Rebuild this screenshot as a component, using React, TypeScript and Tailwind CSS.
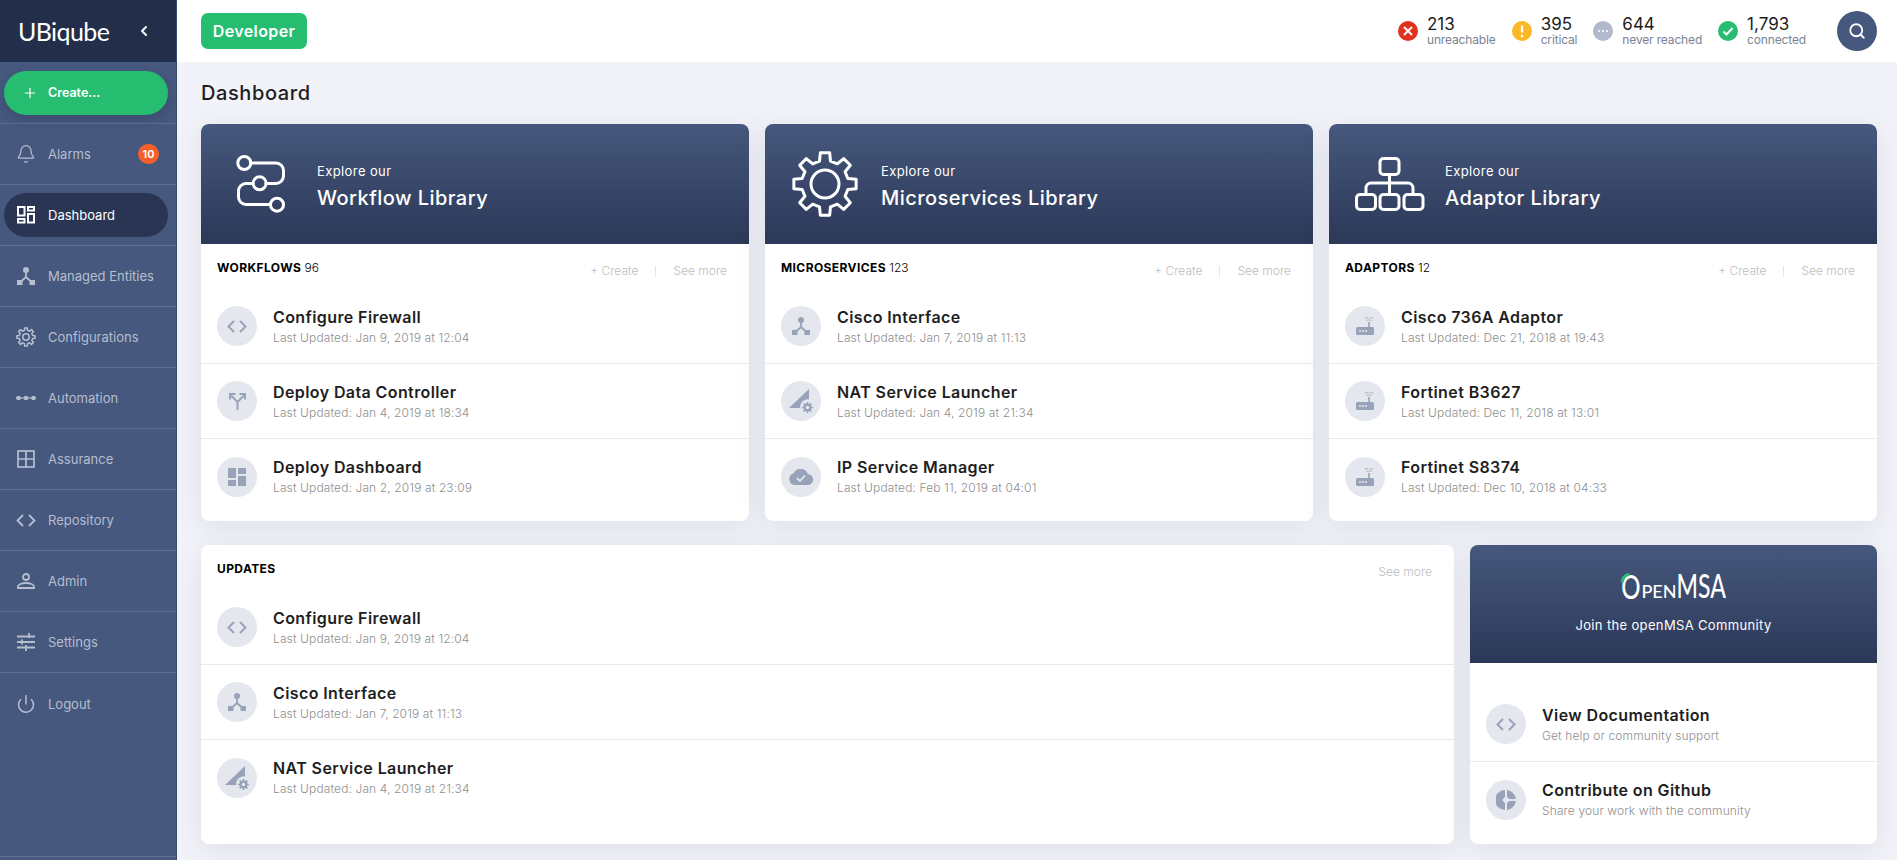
import React from "react";
import { Plus, ChevronLeft, Search, Bell, Power } from "lucide-react";

function gearPath(cx: number, cy: number, ro: number, ri: number, teeth: number) {
  const pts: string[] = [];
  const step = (Math.PI * 2) / teeth;
  for (let i = 0; i < teeth; i++) {
    const a = -Math.PI / 2 + i * step;
    const w1 = step * 0.3;
    const w2 = step * 0.19;
    const p = (r: number, t: number) => `${(cx + r * Math.cos(t)).toFixed(2)} ${(cy + r * Math.sin(t)).toFixed(2)}`;
    pts.push(p(ri, a - w1), p(ro, a - w2), p(ro, a + w2), p(ri, a + w1));
  }
  return "M" + pts.join("L") + "Z";
}

const CodeIcon = ({ c = "#98a2b8", w = 20, sw = 2 }: { c?: string; w?: number; sw?: number }) => (
  <svg width={w} height={w * 0.65} viewBox="0 0 20 13" fill="none" stroke={c} strokeWidth={sw}>
    <path d="M7 1 1.500 6.500 7 12M13 1l5.500 5.500L13 12" />
  </svg>
);
const NetIcon = ({ c = "#98a2b8", s = 18 }: { c?: string; s?: number }) => (
  <svg width={s} height={s} viewBox="0 0 18 18" fill={c}>
    <circle cx="9" cy="3" r="3" />
    <rect x="0" y="13" width="5.500" height="5" />
    <rect x="12.500" y="13" width="5.500" height="5" />
    <path d="M9 4v6M9 10l-5 4.500M9 10l5 4.500" stroke={c} strokeWidth="1.800" fill="none" />
  </svg>
);
const SplitIcon = () => (
  <svg width="17" height="17" viewBox="0 0 17 17" fill="none" stroke="#98a2b8" strokeWidth="2">
    <path d="M8.500 17V9L2 2.500M8.500 9 15 2.500" />
    <path d="M1 6.500V1h5.500M16 6.500V1h-5.500" />
  </svg>
);
const TilesIcon = () => (
  <svg width="18" height="18" viewBox="0 0 18 18" fill="#98a2b8">
    <rect x="0" y="0" width="8" height="10" />
    <rect x="10" y="0" width="8" height="6" />
    <rect x="0" y="12" width="8" height="6" />
    <rect x="10" y="8" width="8" height="10" />
  </svg>
);
const NatIcon = () => (
  <svg width="24" height="24" viewBox="0 0 24 24" fill="#98a2b8">
    <path d="M0 19 20 0v10.500a7.500 7.500 0 0 0-8.800 8.500z" />
    <path d={gearPath(18.500, 18.500, 5.500, 4, 8)} />
    <circle cx="18.500" cy="18.500" r="1.700" fill="#e4e7ed" />
  </svg>
);
const CloudIcon = () => (
  <svg width="24" height="16" viewBox="0 0 24 16" fill="#98a2b8">
    <path d="M6 16a6 6 0 0 1-1.200-11.800A7.500 7.500 0 0 1 18.700 5 5.500 5.500 0 0 1 18.500 16z" />
    <path d="m8 9 3 3 5-5.500" fill="none" stroke="#e4e7ed" strokeWidth="1.800" />
  </svg>
);
const RouterIcon = () => (
  <svg width="18" height="18" viewBox="0 0 18 18" fill="none">
    <path d="M9 1.500a6 6 0 0 1 8 0M10.500 3.800a3.500 3.500 0 0 1 5 0" stroke="#b0b7c8" strokeWidth="1.100" />
    <rect x="12.200" y="5" width="1.600" height="6" fill="#98a2b8" />
    <rect x="0" y="10" width="18" height="8" rx="1.500" fill="#98a2b8" />
    <circle cx="4" cy="14" r="1" fill="#e4e7ed" />
    <circle cx="7" cy="14" r="1" fill="#e4e7ed" />
    <circle cx="10" cy="14" r="1" fill="#e4e7ed" />
  </svg>
);
const PieIcon = () => (
  <svg width="20" height="20" viewBox="0 0 20 20" fill="#98a2b8">
    <path d="M9 0v6.500L6.500 10 9 13.500V20A10 10 0 0 1 9 0z" />
    <path d="M11 0a10 10 0 0 1 8.900 9H13.200L11 6.500z" />
    <path d="M13.200 11h6.700A10 10 0 0 1 11 20v-6.500z" />
  </svg>
);

const side = "#b6bed0";
const sideIcons: Record<string, React.ReactNode> = {
  Alarms: <Bell size={20} strokeWidth={1.5} color={side} />,
  Dashboard: (
    <svg width="18" height="18" viewBox="0 0 18 18" fill="none" stroke="#fff" strokeWidth="2">
      <rect x="1" y="1" width="6.500" height="8.500" />
      <rect x="11" y="1" width="6" height="3.500" />
      <rect x="1" y="13" width="6.500" height="3.500" />
      <rect x="11" y="8" width="6" height="8.500" />
    </svg>
  ),
  "Managed Entities": <NetIcon c={side} />,
  Configurations: (
    <svg width="20" height="20" viewBox="0 0 20 20" fill="none" stroke={side} strokeWidth="1.500" strokeLinejoin="round">
      <path d={gearPath(10, 10, 9.200, 6.800, 8)} />
      <circle cx="10" cy="10" r="3.200" />
    </svg>
  ),
  Automation: (
    <svg width="20" height="6" viewBox="0 0 20 6" fill={side}>
      <path d="M0 3h20" stroke={side} strokeWidth="1.200" />
      <circle cx="2.500" cy="3" r="2.300" />
      <circle cx="10" cy="3" r="2.300" />
      <circle cx="17.500" cy="3" r="2.300" />
    </svg>
  ),
  Assurance: (
    <svg width="18" height="18" viewBox="0 0 18 18" fill="none" stroke={side} strokeWidth="1.700">
      <rect x="1" y="1" width="16" height="16" />
      <path d="M9 1v16M1 9h16" />
    </svg>
  ),
  Repository: <CodeIcon c={side} sw={1.800} />,
  Admin: (
    <svg width="18" height="16" viewBox="0 0 18 16" fill="none" stroke={side} strokeWidth="1.800">
      <circle cx="9" cy="4" r="3" />
      <path d="M1 15v-1.500c0-2 4-3.500 8-3.500s8 1.500 8 3.500V15z" />
    </svg>
  ),
  Settings: (
    <svg width="18" height="18" viewBox="0 0 18 18" fill="none" stroke={side} strokeWidth="1.800">
      <path d="M0 3.500h18M0 9h18M0 14.500h18" />
      <path d="M12 0v5M5 6.500v5M9 12v6" />
    </svg>
  ),
  Logout: <Power size={20} strokeWidth={1.800} color={side} />,
};

const NavItem = ({ label, badge }: { label: string; badge?: string }) => (
  <div className="h-[61px] shrink-0 border-b border-[#5f7094] flex items-center relative">
    <div className="w-[48px] pl-[16px] flex justify-start"><span className="w-[20px] flex justify-center items-center">{sideIcons[label]}</span></div>
    <span className="text-[13px] pt-[2px] text-[#b6bed0]">{label}</span>
    {badge && (
      <span className="absolute left-[138px] top-[20px] w-[21px] h-[20px] rounded-full bg-[#f4602a] text-white text-[11px] font-semibold flex items-center justify-center">
        {badge}
      </span>
    )}
  </div>
);

const Sidebar = () => (
  <aside className="w-[177px] h-[860px] shrink-0 bg-[#46587d] border-r border-[#3a4a6c] flex flex-col overflow-hidden">
    <div className="h-[62px] shrink-0 bg-[#232e4a] flex items-center pl-[18px] pr-[24px] justify-between">
      <span className="text-white text-[25px] leading-none tracking-[-0.6px] font-normal" style={{ fontFamily: "Lato, sans-serif" }}>UBiqube</span>
      <ChevronLeft size={16} strokeWidth={3} color="#fff" />
    </div>
    <div className="h-[62px] shrink-0 border-b border-[#5f7094] pt-[9px] px-[4px]">
      <div className="h-[44px] w-[164px] rounded-full bg-[#26bd71] shadow-[0_4px_10px_rgba(30,40,70,0.25)] flex items-center pl-[18px] gap-[10px] text-white">
        <Plus size={16} strokeWidth={1.800} />
        <span className="text-[12.500px] font-semibold">Create...</span>
      </div>
    </div>
    <NavItem label="Alarms" badge="10" />
    <div className="h-[61px] shrink-0 border-b border-[#5f7094] pt-[8px] px-[4px]">
      <div className="h-[44px] w-[164px] rounded-full bg-[#2a3554] flex items-center">
        <span className="w-[44px] pl-[12px] flex items-center justify-start"><span className="w-[20px] flex justify-center">{sideIcons.Dashboard}</span></span>
        <span className="text-[13px] pt-[2px] text-white">Dashboard</span>
      </div>
    </div>
    <NavItem label="Managed Entities" />
    <NavItem label="Configurations" />
    <NavItem label="Automation" />
    <NavItem label="Assurance" />
    <NavItem label="Repository" />
    <NavItem label="Admin" />
    <NavItem label="Settings" />
    <div className="h-[61px] shrink-0 flex items-center">
      <div className="w-[48px] pl-[16px]"><span className="w-[20px] flex justify-center">{sideIcons.Logout}</span></div>
      <span className="text-[13px] pt-[2px] text-[#b6bed0]">Logout</span>
    </div>
    <div className="h-[123px] shrink-0 border-b border-[#5f7094]" />
  </aside>
);

const statuses = [
  { n: "213", l: "unreachable", bg: "#e0301e", icon: <path d="m6 6 8 8M14 6l-8 8" stroke="#fff" strokeWidth="2" /> },
  { n: "395", l: "critical", bg: "#fbb826", icon: <><path d="M10 4.500v7" stroke="#fff" strokeWidth="2.200" /><circle cx="10" cy="15" r="1.300" fill="#fff" /></> },
  { n: "644", l: "never reached", bg: "#b1b9cb", icon: <><circle cx="6" cy="10" r="1.100" fill="#fff" /><circle cx="10" cy="10" r="1.100" fill="#fff" /><circle cx="14" cy="10" r="1.100" fill="#fff" /></> },
  { n: "1,793", l: "connected", bg: "#26bd71", icon: <path d="m5.500 10.500 3 3 6-6.500" stroke="#fff" strokeWidth="2" fill="none" /> },
];

const Topbar = () => (
  <header className="h-[62px] shrink-0 bg-white flex items-center justify-between pl-[24px] pr-[20px]">
    <div className="h-[36px] w-[106px] rounded-[7px] bg-[#26bd71] text-white text-[16px] font-semibold flex items-center justify-center tracking-[0.4px]">Developer</div>
    <div className="flex items-center">
      <div className="flex items-center gap-[16px] mr-[31px]">
        {statuses.map((s) => (
          <div key={s.l} className="flex items-center gap-[9px]">
            <svg width="20" height="20" viewBox="0 0 20 20" className="shrink-0">
              <circle cx="10" cy="10" r="10" fill={s.bg} />
              {s.icon}
            </svg>
            <div className="flex flex-col">
              <span className="text-[17px] leading-[17px] text-[#1c1c1c]">{s.n}</span>
              <span className="text-[12px] leading-[14px] text-[#7c8294] tracking-[-0.15px]">{s.l}</span>
            </div>
          </div>
        ))}
      </div>
      <div className="w-[40px] h-[40px] rounded-full bg-[#46587d] flex items-center justify-center">
        <Search size={18} strokeWidth={2.400} color="#fff" />
      </div>
    </div>
  </header>
);

const Row = ({ icon, title, sub, last }: { icon: React.ReactNode; title: string; sub: string; last?: boolean }) => (
  <div className={`h-[75px] flex items-center pl-[16px] gap-[16px] ${last ? "" : "border-b border-[#e7e9ef]"}`}>
    <div className="w-[40px] h-[40px] shrink-0 rounded-full bg-[#e4e7ed] flex items-center justify-center">{icon}</div>
    <div className="flex flex-col">
      <span className="text-[16px] leading-[20px] font-semibold text-[#1e1e1e] tracking-[0.4px]">{title}</span>
      <span className="text-[12px] leading-[16px] mt-[3px] font-light text-[#8f8f8f] tracking-[0.12px]">{sub}</span>
    </div>
  </div>
);

const CardHead = ({ label, count, create = true }: { label: string; count?: string; create?: boolean }) => (
  <div className="h-[45px] flex items-start justify-between pl-[16px] pr-[22px]">
    <div className="pt-[17px] text-[12px] leading-[14px] text-black">
      <span className="font-bold tracking-[0.4px]">{label}</span>
      {count && <span className="font-light"> {count}</span>}
    </div>
    <div className="pt-[19px] flex items-center text-[12px] leading-[16px] font-light text-[#bdbdbd]">
      {create && (
        <>
          <span>+ Create</span>
          <span className="w-px h-[11px] bg-[#e2e4ea] mx-[17px]" />
        </>
      )}
      <span>See more</span>
    </div>
  </div>
);

const WorkflowArt = () => (
  <svg width="50" height="58" viewBox="236 156 50 58" fill="none" stroke="#fff" strokeWidth="3" strokeLinecap="round">
    <circle cx="244.300" cy="164" r="6.500" />
    <path d="M250.800 164H276a7.500 7.500 0 0 1 7.500 7.500V177a7.500 7.500 0 0 1-7.500 7.500h-10" />
    <circle cx="259.600" cy="184.300" r="6.500" />
    <path d="M253 184.500h-7a7.500 7.500 0 0 0-7.500 7.500v6a7.500 7.500 0 0 0 7.500 7.500h24.500" />
    <circle cx="277" cy="205.700" r="6.500" />
  </svg>
);
const GearArt = () => (
  <svg width="66" height="66" viewBox="0 0 66 66" fill="none" stroke="#fff" strokeWidth="3" strokeLinejoin="round">
    <path d={gearPath(33, 33, 31.500, 23.500, 8)} />
    <circle cx="33" cy="33" r="14" />
  </svg>
);
const AdaptorArt = () => (
  <svg width="70" height="54" viewBox="0 0 70 54" fill="none" stroke="#fff" strokeWidth="3">
    <rect x="25" y="1.500" width="19" height="16" rx="3.500" />
    <rect x="1.500" y="37.500" width="19" height="15" rx="3.500" />
    <rect x="25" y="37.500" width="19" height="15" rx="3.500" />
    <rect x="49" y="37.500" width="19" height="15" rx="3.500" />
    <path d="M34.500 17.500v20M11 37.500V31a5 5 0 0 1 5-5h37a5 5 0 0 1 5 5v6.500" />
  </svg>
);

const Shadow = "rounded-[8px] bg-white shadow-[0_6px_28px_rgba(70,88,125,0.12)] overflow-hidden";

const LibCard = ({ art, pl, gap, title, label, count, rows }: { art: React.ReactNode; pl: string; gap: string; title: string; label: string; count: string; rows: { i: React.ReactNode; t: string; s: string }[] }) => (
  <div className={`${Shadow} pb-[7px]`}>
    <div className={`h-[120px] bg-gradient-to-b from-[#46587d] to-[#2c3858] flex items-center ${pl} ${gap}`}>
      {art}
      <div className="flex flex-col text-white pt-[4px]">
        <span className="text-[13px] leading-[16px] tracking-[0.4px]">Explore our</span>
        <span className="text-[20px] leading-[24px] mt-[7px] font-medium tracking-[0.45px]">{title}</span>
      </div>
    </div>
    <CardHead label={label} count={count} />
    {rows.map((r, i) => <Row key={r.t} icon={r.i} title={r.t} sub={r.s} last={i === rows.length - 1} />)}
  </div>
);

export default function App() {
  return (
    <div className="w-[1897px] h-[860px] overflow-hidden flex bg-[#f2f3f8]" style={{ fontFamily: "Inter, 'Noto Sans', sans-serif" }}>
      <Sidebar />
      <main className="flex-1 flex flex-col min-w-0">
        <Topbar />
        <div className="pl-[24px] pr-[20px]">
          <div className="h-[62px] flex items-center">
            <h1 className="text-[20px] font-medium text-[#1e1e1e] tracking-[0.6px]">Dashboard</h1>
          </div>
          <div className="grid grid-cols-3 gap-[16px]">
            <LibCard art={<WorkflowArt />} pl="pl-[35px]" gap="gap-[31px]" title="Workflow Library" label="WORKFLOWS" count="96"
              rows={[
                { i: <CodeIcon />, t: "Configure Firewall", s: "Last Updated: Jan 9, 2019 at 12:04" },
                { i: <SplitIcon />, t: "Deploy Data Controller", s: "Last Updated: Jan 4, 2019 at 18:34" },
                { i: <TilesIcon />, t: "Deploy Dashboard", s: "Last Updated: Jan 2, 2019 at 23:09" },
              ]} />
            <LibCard art={<GearArt />} pl="pl-[27px]" gap="gap-[23px]" title="Microservices Library" label="MICROSERVICES" count="123"
              rows={[
                { i: <NetIcon />, t: "Cisco Interface", s: "Last Updated: Jan 7, 2019 at 11:13" },
                { i: <NatIcon />, t: "NAT Service Launcher", s: "Last Updated: Jan 4, 2019 at 21:34" },
                { i: <CloudIcon />, t: "IP Service Manager", s: "Last Updated: Feb 11, 2019 at 04:01" },
              ]} />
            <LibCard art={<AdaptorArt />} pl="pl-[26px]" gap="gap-[20px]" title="Adaptor Library" label="ADAPTORS" count="12"
              rows={[
                { i: <RouterIcon />, t: "Cisco 736A Adaptor", s: "Last Updated: Dec 21, 2018 at 19:43" },
                { i: <RouterIcon />, t: "Fortinet B3627", s: "Last Updated: Dec 11, 2018 at 13:01" },
                { i: <RouterIcon />, t: "Fortinet S8374", s: "Last Updated: Dec 10, 2018 at 04:33" },
              ]} />
          </div>
          <div className="flex gap-[16px] mt-[24px]">
            <div className={`${Shadow} flex-1 h-[299px]`}>
              <CardHead label="UPDATES" create={false} />
              <Row icon={<CodeIcon />} title="Configure Firewall" sub="Last Updated: Jan 9, 2019 at 12:04" />
              <Row icon={<NetIcon />} title="Cisco Interface" sub="Last Updated: Jan 7, 2019 at 11:13" />
              <Row icon={<NatIcon />} title="NAT Service Launcher" sub="Last Updated: Jan 4, 2019 at 21:34" last />
            </div>
            <div className={`${Shadow} w-[407px] h-[299px]`}>
              <div className="h-[118px] bg-gradient-to-b from-[#46587d] to-[#2c3858] flex flex-col items-center text-white">
                <div className="relative mt-[28px] h-[26px] flex items-end font-medium" style={{ fontFamily: "Lato, sans-serif" }}>
                  <span className="text-[24px] leading-[19px] h-[19px] scale-y-[1.35] origin-bottom">O</span>
                  <span className="text-[18px] leading-[15px] h-[15px] ml-[1px]">PEN</span>
                  <span className="text-[23px] leading-[19px] h-[19px] scale-y-[1.4] origin-bottom">MSA</span>
                  <svg width="13" height="10" viewBox="0 0 13 10" fill="none" className="absolute left-[0px] top-[0px] z-10">
                    <path d="M1.500 9.500A7 7 0 0 1 8.500 1.500" stroke="#26bd71" strokeWidth="3" />
                  </svg>
                </div>
                <span className="text-[13px] leading-[16px] mt-[17px] pt-[1px] tracking-[0.35px]">Join the openMSA Community</span>
              </div>
              <div className="pt-[24px]">
                <Row icon={<CodeIcon />} title="View Documentation" sub="Get help or community support" />
                <Row icon={<PieIcon />} title="Contribute on Github" sub="Share your work with the community" last />
              </div>
            </div>
          </div>
        </div>
      </main>
    </div>
  );
}
